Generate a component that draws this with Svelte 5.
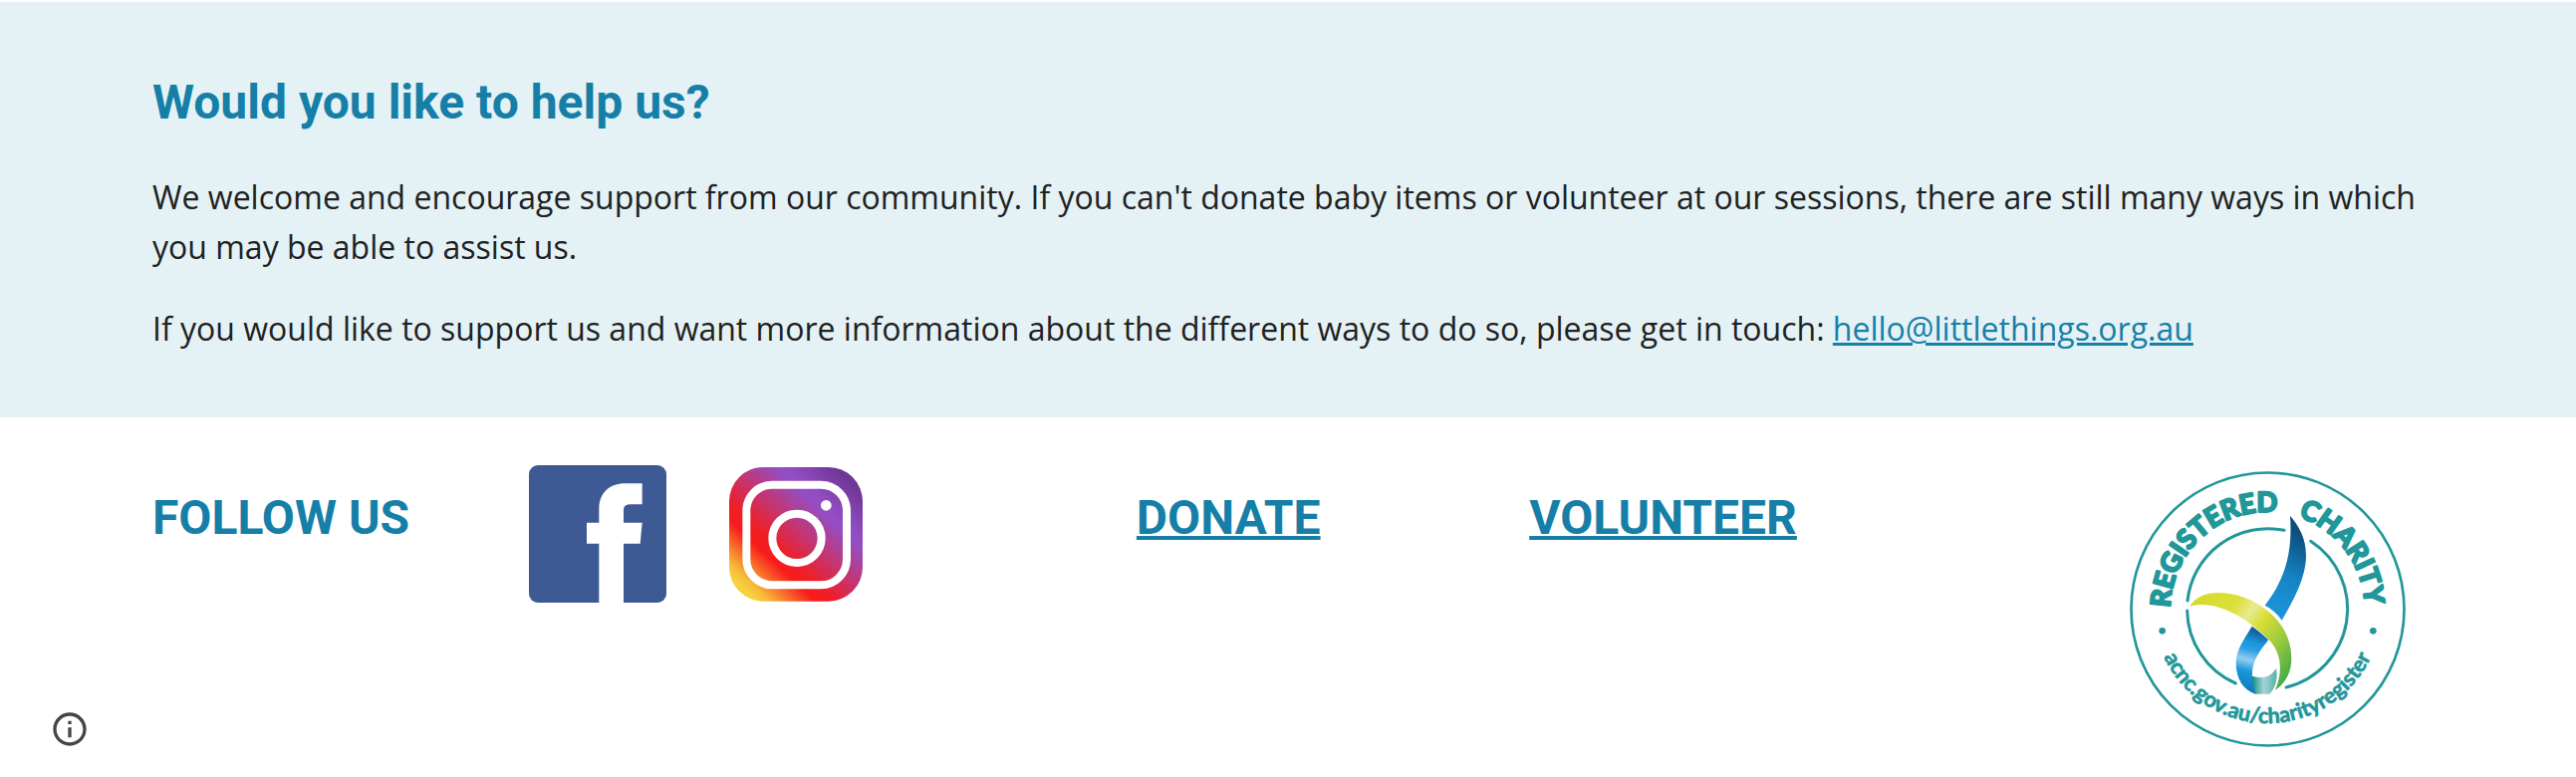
<script>
  const email = 'hello@littlethings.org.au';
</script>

<main>
  <section class="help">
    <h2>Would you like to help us?</h2>
    <p>
      We welcome and encourage support from our community. If you can't donate baby items or
      volunteer at our sessions, there are still many ways in which you may be able to assist us.
    </p>
    <p>
      If you would like to support us and want more information about the different ways to do so,
      please get in touch: <a href={`mailto:${email}`}>{email}</a>
    </p>
  </section>

  <footer>
    <h2>FOLLOW US</h2>

    <a class="social facebook" href="#facebook" aria-label="Facebook">
      <svg viewBox="66 81 414 414" aria-hidden="true">
        <rect x="66" y="81" width="414" height="414" rx="27" fill="#3d5a94" />
        <path
          d="M277 495V317H240V254H277V215C277 165 307 136 356 136H407V199H371C357 199 351 205 351 217V254H407L401 317H351V495Z"
          fill="#fff"
        />
      </svg>
    </a>

    <a class="social instagram" href="#instagram" aria-label="Instagram">
      <svg viewBox="665 87 402 404" aria-hidden="true">
        <defs>
          <linearGradient id="insta" gradientUnits="userSpaceOnUse" x1="711" y1="458" x2="1025" y2="126">
            <stop offset="0" stop-color="#f8d23c" />
            <stop offset="0.06" stop-color="#f6bd3b" />
            <stop offset="0.27" stop-color="#f81c1b" />
            <stop offset="0.35" stop-color="#f01e24" />
            <stop offset="0.74" stop-color="#924fc6" />
            <stop offset="0.8" stop-color="#904bc0" />
            <stop offset="1" stop-color="#6e3696" />
          </linearGradient>
        </defs>
        <rect x="665" y="87" width="402" height="404" rx="103" fill="url(#insta)" />
        <rect x="717" y="140" width="302" height="302" rx="78" fill="none" stroke="#fff" stroke-width="24" />
        <circle cx="869" cy="301" r="74" fill="none" stroke="#fff" stroke-width="24" />
        <circle cx="957" cy="202" r="16" fill="#fff" />
      </svg>
    </a>

    <h2><a href="#donate">DONATE</a></h2>
    <h2><a href="#volunteer">VOLUNTEER</a></h2>

    <a class="seal" href="#charity" aria-label="Registered charity">
      <svg viewBox="81 70 831 831">
        <defs>
          <path id="arc-top" d="M203 485A293 293 0 0 1 789 485A293 293 0 0 1 203 485" />
          <path id="arc-bottom" d="M152 485A344 344 0 0 0 840 485" />
          <linearGradient id="blade" gradientUnits="userSpaceOnUse" x1="605" y1="260" x2="500" y2="480">
            <stop offset="0" stop-color="#0b4d7c" />
            <stop offset="0.55" stop-color="#1684c4" />
            <stop offset="1" stop-color="#1a94d8" />
          </linearGradient>
          <linearGradient id="tail" gradientUnits="userSpaceOnUse" x1="475" y1="555" x2="430" y2="730">
            <stop offset="0" stop-color="#14609c" />
            <stop offset="0.2" stop-color="#1a97de" />
            <stop offset="0.32" stop-color="#2b9fe2" />
            <stop offset="0.5" stop-color="#93cdf3" />
            <stop offset="0.68" stop-color="#1c97dc" />
            <stop offset="1" stop-color="#1279bb" />
          </linearGradient>
          <linearGradient id="band" gradientUnits="userSpaceOnUse" x1="262" y1="460" x2="570" y2="690">
            <stop offset="0" stop-color="#d6d92c" />
            <stop offset="0.3" stop-color="#dcdf38" />
            <stop offset="0.43" stop-color="#e8ea91" />
            <stop offset="0.55" stop-color="#d9de36" />
            <stop offset="0.78" stop-color="#93c63f" />
            <stop offset="1" stop-color="#38a948" />
          </linearGradient>
          <linearGradient id="base" gradientUnits="userSpaceOnUse" x1="450" y1="0" x2="525" y2="0">
            <stop offset="0" stop-color="#168c88" />
            <stop offset="0.45" stop-color="#a3d3d3" />
            <stop offset="0.6" stop-color="#93cbca" />
            <stop offset="1" stop-color="#55acaa" />
          </linearGradient>
        </defs>

        <circle class="ring outer" cx="496.5" cy="485.5" r="411" />
        <path class="ring" d="M255 460A243 243 0 0 1 546 248" />
        <path class="ring" d="M626 281A243 243 0 0 1 552 721" />
        <path class="ring" d="M400 709A243 243 0 0 1 254 490" />

        <circle class="dot" cx="179" cy="551" r="10" />
        <circle class="dot" cx="814" cy="551" r="10" />

        <text class="name"><textPath href="#arc-top" startOffset="4">REGISTERED</textPath></text>
        <text class="name"><textPath href="#arc-top" startOffset="554">CHARITY</textPath></text>
        <text class="site">
          <textPath href="#arc-bottom" startOffset="50%" text-anchor="middle">acnc.gov.au/charityregister</textPath>
        </text>

        <path
          d="M564 204C590 234 612 272 612 324C612 392 572 462 539 519C525 499 508 484 488 474C535 412 574 338 564 204Z"
          fill="url(#blade)"
        />
        <path d="M450 687C482 697 508 688 522 664C527 690 523 722 502 741H458C450 728 448 708 450 687Z" fill="url(#base)" />
        <path
          d="M449 537C468 550 485 564 499 578C466 618 448 650 450 688C451 710 455 728 460 741C424 730 401 696 401 648C401 606 425 578 449 537Z"
          fill="url(#tail)"
        />
        <path
          d="M261 477C281 448 312 435 353 436C420 438 482 470 524 517C553 550 568 590 568 635C568 676 549 711 519 729C545 668 536 612 496 573C468 547 438 524 408 506C360 478 307 463 261 477Z"
          fill="url(#band)"
        />
      </svg>
    </a>
  </footer>

  <button class="info" type="button" aria-label="Site information">
    <svg viewBox="0 0 24 24" aria-hidden="true">
      <path
        d="M11 17h2v-6h-2v6zm1-15C6.480 2 2 6.480 2 12s4.480 10 10 10 10-4.480 10-10S17.520 2 12 2zm0 18c-4.410 0-8-3.590-8-8s3.590-8 8-8 8 3.590 8 8-3.590 8-8 8zM11 9h2V7h-2v2z"
        fill="#434649"
      />
    </svg>
  </button>
</main>

<style>
  :global(body) {
    margin: 0;
    background: #fff;
  }

  main {
    position: relative;
    min-height: 100vh;
    box-sizing: border-box;
    padding-top: 2px;
    color: #212121;
    font-family: 'Open Sans', sans-serif;
    font-size: 32px;
    line-height: 50px;
  }

  .help {
    padding: 72px 153px 64px;
    background: #e4f2f6;
  }

  h2 {
    margin: 0;
    color: #167fa8;
    font-family: Roboto, sans-serif;
    font-size: 48px;
    font-weight: 700;
    line-height: 58px;
  }

  p {
    margin: 0;
  }

  .help h2 {
    margin-bottom: 41px;
  }

  p + p {
    margin-top: 32px;
  }

  a {
    color: #167fa8;
    text-decoration: underline;
    text-decoration-thickness: 3px;
  }

  h2 a {
    text-decoration-thickness: 4px;
  }

  footer {
    display: grid;
    grid-template-columns: 378fr 200fr 409fr 394fr 602fr 295fr;
    align-items: start;
    padding: 48px 153px 26px;
  }

  footer h2 {
    margin-top: 24px;
  }

  svg {
    display: block;
    width: 100%;
  }

  .social {
    width: 138px;
  }

  .instagram {
    width: 134px;
    margin-top: 2px;
  }

  .seal {
    width: 277px;
    margin-top: 6px;
  }

  .ring {
    fill: none;
    stroke: #21979a;
    stroke-width: 9;
    stroke-linecap: round;
  }

  .outer {
    stroke-width: 8;
  }

  .dot {
    fill: #21979a;
  }

  .name,
  .site {
    fill: #21979a;
    stroke: #21979a;
    stroke-linejoin: round;
    font-family: Lato, sans-serif;
    font-weight: 700;
  }

  .name {
    font-size: 82px;
    stroke-width: 7;
  }

  .site {
    font-size: 65px;
    stroke-width: 2;
  }

  .info {
    position: absolute;
    bottom: 28px;
    left: 50px;
    width: 40px;
    padding: 0;
    border: 0;
    background: none;
    cursor: pointer;
  }
</style>
